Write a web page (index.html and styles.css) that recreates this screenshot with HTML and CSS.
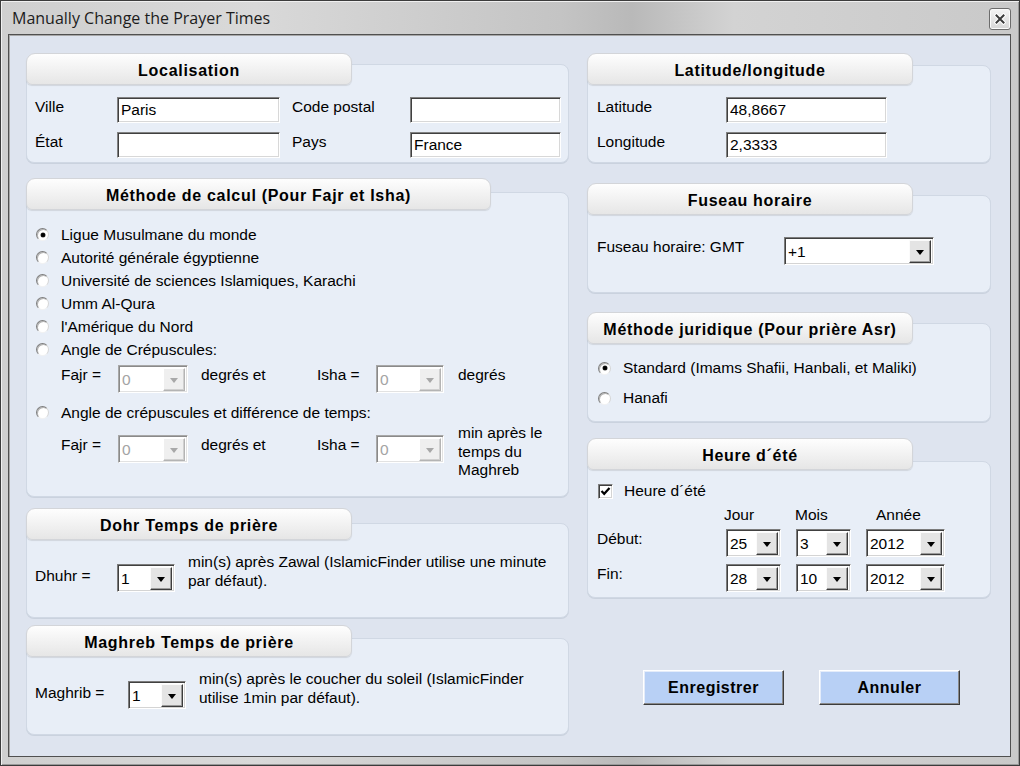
FILE: index.html
```html
<!DOCTYPE html>
<html>
<head>
    <title>Manually Change the Prayer Times</title>
    <link rel="stylesheet" href="styles.css">
</head>
<body>
<div class="window">
    <div class="titlebar">
        <span class="title">Manually Change the Prayer Times</span>
        <span class="close">
            <svg width="12" height="12" viewBox="0 0 12 12">
                <path d="M2.5 2.5L9.5 9.5M9.5 2.5L2.5 9.5" stroke="#fff" stroke-width="4" stroke-linecap="square"/>
                <path d="M2.5 2.5L9.5 9.5M9.5 2.5L2.5 9.5" stroke="#3a3a3a" stroke-width="2" stroke-linecap="square"/>
            </svg>
        </span>
    </div>
    <div class="client">
        <div class="column">
            <!-- Localisation -->
            <section class="group g-loc">
                <div class="tab">Localisation</div>
                <div class="panel">
                    <div class="loc-grid">
                        <span class="lbl">Ville</span>
                        <input class="field w163" type="text" value="Paris">
                        <span class="lbl">Code postal</span>
                        <input class="field w151" type="text" value="">
                        <span class="lbl">État</span>
                        <input class="field w163" type="text" value="">
                        <span class="lbl">Pays</span>
                        <input class="field w151" type="text" value="France">
                    </div>
                </div>
            </section>

            <!-- Méthode de calcul -->
            <section class="group g-calc">
                <div class="tab wide">Méthode de calcul (Pour Fajr et Isha)</div>
                <div class="panel">
                    <div class="radio-row"><span class="radio on"></span>Ligue Musulmane du monde</div>
                    <div class="radio-row"><span class="radio"></span>Autorité générale égyptienne</div>
                    <div class="radio-row"><span class="radio"></span>Université de sciences Islamiques, Karachi</div>
                    <div class="radio-row"><span class="radio"></span>Umm Al-Qura</div>
                    <div class="radio-row"><span class="radio"></span>l'Amérique du Nord</div>
                    <div class="radio-row"><span class="radio"></span>Angle de Crépuscules:</div>
                    <div class="angle-row">
                        <span class="lbl">Fajr =</span>
                        <div class="combo off w70"><span class="val">0</span><span class="arrow"></span></div>
                        <span class="lbl">degrés et</span>
                        <span class="lbl">Isha =</span>
                        <div class="combo off w68"><span class="val">0</span><span class="arrow"></span></div>
                        <span class="lbl">degrés</span>
                    </div>
                    <div class="radio-row second"><span class="radio"></span>Angle de crépuscules et différence de temps:</div>
                    <div class="angle-row low">
                        <span class="lbl">Fajr =</span>
                        <div class="combo off w70"><span class="val">0</span><span class="arrow"></span></div>
                        <span class="lbl">degrés et</span>
                        <span class="lbl">Isha =</span>
                        <div class="combo off w68"><span class="val">0</span><span class="arrow"></span></div>
                        <span class="note">min après le<br>temps du<br>Maghreb</span>
                    </div>
                </div>
            </section>

            <!-- Dohr -->
            <section class="group g-dohr">
                <div class="tab">Dohr Temps de prière</div>
                <div class="panel">
                    <div class="offset-row dohr">
                        <span class="lbl">Dhuhr =</span>
                        <div class="combo w58"><span class="val">1</span><span class="arrow"></span></div>
                        <span class="note">min(s) après Zawal (IslamicFinder utilise une minute<br>par défaut).</span>
                    </div>
                </div>
            </section>

            <!-- Maghreb -->
            <section class="group g-magh">
                <div class="tab">Maghreb Temps de prière</div>
                <div class="panel">
                    <div class="offset-row magh">
                        <span class="lbl">Maghrib =</span>
                        <div class="combo w58"><span class="val">1</span><span class="arrow"></span></div>
                        <span class="note">min(s) après le coucher du soleil (IslamicFinder<br>utilise 1min par défaut).</span>
                    </div>
                </div>
            </section>
        </div>

        <div class="column">
            <!-- Latitude/longitude -->
            <section class="group g-latlng">
                <div class="tab">Latitude/longitude</div>
                <div class="panel">
                    <div class="pair-grid">
                        <span class="lbl">Latitude</span>
                        <input class="field w161" type="text" value="48,8667">
                        <span class="lbl">Longitude</span>
                        <input class="field w161" type="text" value="2,3333">
                    </div>
                </div>
            </section>

            <!-- Fuseau horaire -->
            <section class="group g-tz">
                <div class="tab">Fuseau horaire</div>
                <div class="panel">
                    <div class="tz-row">
                        <span class="lbl">Fuseau horaire: GMT</span>
                        <div class="combo w150"><span class="val">+1</span><span class="arrow"></span></div>
                    </div>
                </div>
            </section>

            <!-- Méthode juridique -->
            <section class="group g-asr">
                <div class="tab">Méthode juridique (Pour prière Asr)</div>
                <div class="panel">
                    <div class="radio-row tall"><span class="radio on"></span>Standard (Imams Shafii, Hanbali, et Maliki)</div>
                    <div class="radio-row tall"><span class="radio"></span>Hanafi</div>
                </div>
            </section>

            <!-- Heure d'été -->
            <section class="group g-dst">
                <div class="tab">Heure d´été</div>
                <div class="panel">
                    <div class="check-row">
                        <span class="check">
                            <svg width="11" height="11" viewBox="0 0 11 11">
                                <path d="M1.5 5L4.2 7.8L9.5 2" fill="none" stroke="#000" stroke-width="2.2"/>
                            </svg>
                        </span>
                        Heure d´été
                    </div>
                    <div class="dst-grid">
                        <span></span>
                        <span class="hd jour">Jour</span>
                        <span class="hd mois">Mois</span>
                        <span class="hd annee">Année</span>

                        <span class="lbl">Début:</span>
                        <div class="combo w55"><span class="val">25</span><span class="arrow"></span></div>
                        <div class="combo w55"><span class="val">3</span><span class="arrow"></span></div>
                        <div class="combo w79"><span class="val">2012</span><span class="arrow"></span></div>

                        <span class="lbl">Fin:</span>
                        <div class="combo w55"><span class="val">28</span><span class="arrow"></span></div>
                        <div class="combo w55"><span class="val">10</span><span class="arrow"></span></div>
                        <div class="combo w79"><span class="val">2012</span><span class="arrow"></span></div>
                    </div>
                </div>
            </section>

            <div class="actions">
                <button class="btn">Enregistrer</button>
                <button class="btn">Annuler</button>
            </div>
        </div>
    </div>
</div>
</body>
</html>
```

FILE: styles.css
```css
* {
    box-sizing: border-box;
}

body {
    margin: 0;
    font-family: "Liberation Sans", Arial, sans-serif;
    font-size: 15.5px;
    color: #000;
    background: #fff;
}

/* window frame */

.window {
    width: 1020px;
    height: 766px;
    border: 1px solid #3c3c3c;
    padding: 0 8px 8px 7px;
    display: flex;
    flex-direction: column;
    background: linear-gradient(to right, #cfcfcf 0%, #d9d9d9 25%, #c4c4c4 55%, #b9b9b9 62%, #d3d3d3 72%, #c9c9c9 100%);
    box-shadow: inset 1px 1px 0 #f0f0f0, inset -1px -1px 0 #9a9a9a;
}

.titlebar {
    height: 33px;
    display: flex;
    justify-content: space-between;
    align-items: flex-start;
}

.title {
    font-family: "Open Sans", "Noto Sans", sans-serif;
    font-size: 16px;
    line-height: 22px;
    padding: 6px 0 0 4px;
    color: #1c1c1c;
}

.close {
    margin-top: 7px;
    width: 22px;
    height: 22px;
    border: 1px solid #6c6c6c;
    border-radius: 3px;
    background: linear-gradient(#f4f4f4, #d6d6d6);
    box-shadow: inset 0 0 0 1px #fafafa;
    display: flex;
    align-items: center;
    justify-content: center;
}

.client {
    flex: 1;
    border: 1px solid #505050;
    box-shadow: inset 1px 1px 0 #a8a8a8;
    background: #dee4ef;
    padding: 18px 0 0 17px;
    display: grid;
    grid-template-columns: 543px 404px;
    column-gap: 18px;
    align-items: start;
}

.column {
    display: flex;
    flex-direction: column;
}

/* group boxes */

.tab {
    position: relative;
    z-index: 1;
    width: 326px;
    height: 32px;
    padding-top: 3px;
    line-height: 28px;
    text-align: center;
    font-weight: bold;
    font-size: 16px;
    letter-spacing: 0.7px;
    border: 1px solid #d3d5d9;
    border-radius: 9px 9px 6px 6px;
    background: linear-gradient(#fefefe, #f3f3f3 45%, #e6e6e6);
    box-shadow: 0 1px 1px rgba(0, 0, 0, 0.1);
}

.tab.wide {
    width: 465px;
}

.panel {
    border: 1px solid #d0d8e4;
    border-radius: 8px;
    background: #e8eef7;
    box-shadow: 0 1px 0 #cad2de;
}

.lbl {
    line-height: 20px;
}

.g-loc .panel { margin-top: -21px; height: 99px; padding: 32px 0 0 8px; }
.g-calc { margin-top: 15px; }
.g-calc .panel { margin-top: -18px; height: 305px; padding: 30px 0 0 9px; }
.g-dohr { margin-top: 11px; }
.g-dohr .panel { margin-top: -17px; height: 95px; padding: 29px 0 0 8px; }
.g-magh { margin-top: 7px; }
.g-magh .panel { margin-top: -19px; height: 97px; padding: 31px 0 0 8px; }

.g-latlng .panel { margin-top: -20px; height: 98px; padding: 31px 0 0 9px; }
.g-tz { margin-top: 20px; }
.g-tz .panel { margin-top: -20px; height: 98px; padding: 41px 0 0 9px; }
.g-asr { margin-top: 19px; }
.g-asr .panel { margin-top: -21px; height: 99px; padding: 29px 0 0 10px; }
.g-dst { margin-top: 16px; }
.g-dst .panel { margin-top: -9px; height: 137px; padding: 18px 0 0 9px; }

/* fields */

.field {
    height: 26px;
    padding: 0 3px;
    font: inherit;
    color: #000;
    background: #fff;
    border: 1px solid;
    border-color: #828282 #fff #fff #828282;
    box-shadow: inset 1px 1px 0 #404040, inset -1px -1px 0 #d8d8d8;
    outline: none;
}

.w163 { width: 163px; }
.w161 { width: 161px; }
.w151 { width: 151px; }

.loc-grid {
    display: grid;
    grid-template-columns: 82px 175px 118px 151px;
    row-gap: 9px;
    align-items: start;
}

.pair-grid {
    display: grid;
    grid-template-columns: 129px 161px;
    row-gap: 9px;
    align-items: start;
}

/* combo boxes */

.combo {
    display: flex;
    height: 28px;
    background: #fff;
    border: 1px solid;
    border-color: #7c7c7c #fff #fff #7c7c7c;
    box-shadow: inset 1px 1px 0 #404040, inset -1px -1px 0 #d4d4d4;
    padding: 2px 2px 1px 1px;
}

.combo .val {
    flex: 1;
    padding-left: 2px;
    line-height: 23px;
}

.combo .arrow {
    width: 22px;
    background: #e4e4e4;
    border: 1px solid;
    border-color: #fbfbfb #3c3c3c #3c3c3c #fbfbfb;
    box-shadow: inset -1px -1px 0 #9a9a9a;
    display: flex;
    align-items: center;
    justify-content: center;
}

.combo .arrow::after {
    content: "";
    border-top: 5px solid #000;
    border-left: 4.5px solid transparent;
    border-right: 4.5px solid transparent;
    margin-top: 1px;
}

.combo.off {
    border-color: #a8a8a8 #fff #fff #a8a8a8;
    box-shadow: inset 1px 1px 0 #8a8a8a, inset -1px -1px 0 #e2e2e2;
    color: #a4a4a4;
}

.combo.off .arrow {
    background: #efefef;
    border-color: #fff #b4b4b4 #b4b4b4 #fff;
    box-shadow: inset -1px -1px 0 #d0d0d0;
}

.combo.off .arrow::after {
    border-top-color: #a8a8a8;
}

.w70 { width: 70px; }
.w68 { width: 68px; }
.w58 { width: 58px; }
.w55 { width: 55px; }
.w79 { width: 79px; }
.w150 { width: 150px; }

/* radios and checkbox */

.radio-row {
    display: flex;
    align-items: center;
    height: 23px;
}

.radio-row.second {
    margin-top: 8px;
}

.radio-row.tall {
    height: 30px;
}

.radio {
    width: 13px;
    height: 13px;
    margin-right: 12px;
    border-radius: 50%;
    border: 1px solid;
    border-color: #7e7e7e #d6d6d6 #f2f2f2 #7e7e7e;
    background: radial-gradient(circle at 60% 60%, #fff 55%, #e6e6e6);
    box-shadow: inset 1px 1px 0 #b4b4b4;
    display: flex;
    align-items: center;
    justify-content: center;
}

.radio.on::after {
    content: "";
    width: 4px;
    height: 4px;
    border-radius: 50%;
    background: #000;
    box-shadow: 0 0 0 0.5px #333;
}

.check-row {
    display: flex;
    align-items: center;
    height: 22px;
    margin-left: 1px;
}

.check {
    width: 15px;
    height: 15px;
    margin-right: 11px;
    background: #fff;
    border: 1px solid;
    border-color: #808080 #fff #fff #808080;
    box-shadow: inset 1px 1px 0 #404040, inset -1px -1px 0 #d4d4d4;
    display: flex;
    align-items: center;
    justify-content: center;
}

/* angle rows */

.angle-row {
    display: grid;
    grid-template-columns: 57px 83px 116px 59px 82px auto;
    align-items: start;
    margin: 4px 0 0 25px;
}

.angle-row.low {
    margin-top: 11px;
}

.note {
    line-height: 18.5px;
}

.angle-row .note {
    margin-top: -11px;
}

.offset-row {
    display: grid;
    align-items: start;
}

.offset-row .combo {
    margin-top: 11px;
}

.offset-row .lbl {
    margin-top: 13px;
}

.offset-row.dohr {
    grid-template-columns: 82px 71px auto;
}

.offset-row.magh {
    grid-template-columns: 93px 71px auto;
}

.tz-row {
    display: grid;
    grid-template-columns: 187px 150px;
    align-items: start;
}

/* daylight saving grid */

.dst-grid {
    display: grid;
    grid-template-columns: 114px 55px 55px 79px;
    grid-template-rows: 24px 35px 28px;
    column-gap: 15px;
    margin-top: 3px;
    align-items: start;
}

.hd {
    line-height: 20px;
}

.hd.jour { margin-left: -2px; }
.hd.mois { margin-left: -1px; }
.hd.annee { margin-left: 10px; }

/* buttons */

.actions {
    display: flex;
    gap: 35px;
    margin-top: 72px;
    padding-left: 56px;
}

.btn {
    width: 141px;
    height: 35px;
    font-family: inherit;
    font-size: 16px;
    font-weight: bold;
    letter-spacing: 0.5px;
    color: #000;
    background: #b8d0f5;
    border: 1px solid;
    border-color: #fff #3c3c3c #3c3c3c #fff;
    box-shadow: inset -1px -1px 0 #8a8a8a, inset 1px 1px 0 #e4ecfa;
    padding: 0;
}
```
